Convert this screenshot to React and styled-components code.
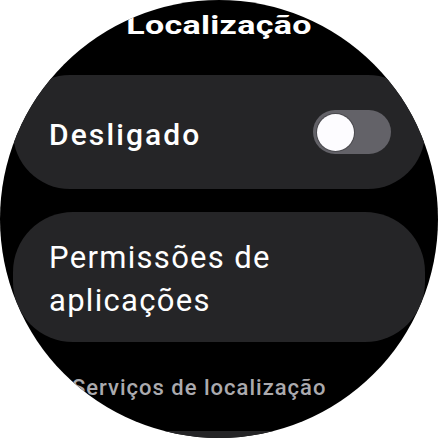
import React from "react";
import styled, { createGlobalStyle } from "styled-components";

const Global = createGlobalStyle`
  html, body { margin: 0; padding: 0; background: #ffffff; }
  body { font-family: Roboto, "Noto Sans", sans-serif; }
`;

const Screen = styled.div`
  width: 438px;
  height: 438px;
  border-radius: 50%;
  overflow: hidden;
  background: #000;
  color: #fff;
`;

const List = styled.div`
  display: flex;
  flex-direction: column;
  padding: 0 13px;
`;

const Title = styled.h1`
  margin: 0;
  padding-top: 2px;
  height: 73px;
  box-sizing: content-box;
  text-align: center;
  font-size: 34px;
  font-weight: 700;
  line-height: 40px;
  letter-spacing: 0.3px;
  transform: scaleY(0.74);
  transform-origin: 50% 33px;
`;

const Card = styled.div`
  background: #252527;
  border-radius: 60px;
  display: flex;
  align-items: center;
  justify-content: space-between;
  height: ${(p) => p.$h}px;
  padding: 4px 34px 0 36px;
  box-sizing: border-box;
  margin-bottom: ${(p) => p.$mb || 0}px;
`;

const Label = styled.div`
  font-size: ${(p) => (p.$bold ? 30 : 31)}px;
  font-weight: ${(p) => (p.$bold ? 500 : 400)};
  line-height: 43px;
  letter-spacing: ${(p) => (p.$bold ? 2.1 : 1.3)}px;
`;

const Track = styled.div`
  width: 78px;
  height: 44px;
  margin-top: -4px;
  border-radius: 22px;
  background: #636268;
  display: flex;
  align-items: center;
  padding: 0 4px;
  box-sizing: border-box;
`;

const Thumb = styled.div`
  width: 37px;
  height: 37px;
  border-radius: 50%;
  background: #fdfcff;
  box-shadow: 0 0 0 1px rgba(0, 0, 0, 0.25);
`;

const Section = styled.div`
  color: #abaaae;
  font-size: 22px;
  font-weight: 500;
  text-align: left;
  padding-left: 59px;
  line-height: 30px;
  margin: 31px 0 28px;
  letter-spacing: 1px;
`;

export default function App() {
  return (
    <>
      <Global />
      <Screen>
        <List>
          <Title>Localização</Title>
          <Card $h={114} $mb={23}>
            <Label $bold>Desligado</Label>
            <Track>
              <Thumb />
            </Track>
          </Card>
          <Card $h={130}>
            <Label>
              Permissões de
              <br />
              aplicações
            </Label>
          </Card>
          <Section>Serviços de localização</Section>
          <Card $h={114} />
        </List>
      </Screen>
    </>
  );
}
